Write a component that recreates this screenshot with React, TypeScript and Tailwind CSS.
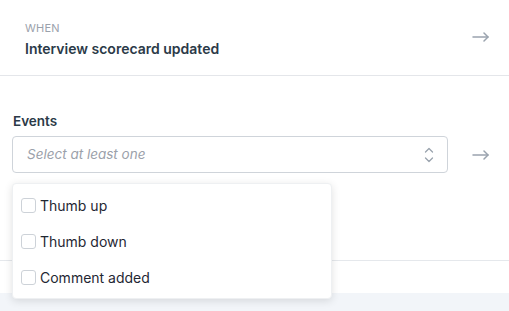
import React from 'react';

const ArrowRight = () => (
  <svg width="17" height="10" viewBox="0 0 17 10" fill="none" stroke="#9aa3ae" strokeWidth="1.5" strokeLinecap="round" strokeLinejoin="round">
    <path d="M1 5h15" />
    <path d="M12 1l4 4-4 4" />
  </svg>
);

const UpDown = () => (
  <svg width="10" height="16" viewBox="0 0 10 16" fill="none" stroke="#9aa3ae" strokeWidth="1.3" strokeLinecap="round" strokeLinejoin="round">
    <path d="M1.5 5L5 1.5 8.5 5" />
    <path d="M1.5 11L5 14.5 8.5 11" />
  </svg>
);

const options = ['Thumb up', 'Thumb down', 'Comment added'];

const App: React.FC = () => {
  return (
    <div className="relative h-[311px] w-[509px] overflow-hidden bg-white" style={{ fontFamily: 'Inter, "Noto Sans", sans-serif' }}>
      {/* WHEN header */}
      <div className="flex h-[76px] items-center justify-between border-b border-[#e4e6ea] pl-[25px] pr-[20px]">
        <div className="flex flex-col pt-[3px]">
          <span className="text-[11px] leading-[14px] tracking-[0.02em] text-[#9aa1ab]">WHEN</span>
          <span className="mt-[6px] text-[14px] font-semibold leading-[16px] text-[#2b3a48]">Interview scorecard updated</span>
        </div>
        <div className="mt-[-2px]"><ArrowRight /></div>
      </div>

      {/* Events */}
      <div className="pl-[12px] pr-[20px] pt-[37px]">
        <div className="pl-[1px] text-[13.5px] font-semibold leading-[16px] text-[#2b3a48]">Events</div>
        <div className="mt-[7px] flex items-center justify-between">
          <div className="flex h-[37px] w-[436px] items-center justify-between rounded-[4px] border border-[#cfd4da] pl-[14px] pr-[13px]">
            <span className="text-[13.5px] italic text-[#9ba1aa]">Select at least one</span>
            <UpDown />
          </div>
          <ArrowRight />
        </div>
      </div>

      <div className="mt-[87px] border-t border-[#e5e8ec]" />
      <div className="mt-[32px] h-[20px] bg-[#f2f5f9]" />

      {/* Dropdown menu */}
      <div className="absolute left-[12px] top-[183px] w-[320px] rounded-[4px] border border-[#eef0f2] bg-white py-[3px] shadow-[0_2px_8px_rgba(0,0,0,0.12)]">
        {options.map((o) => (
          <div key={o} className="flex h-[36px] items-center pl-[8px]">
            <span className="h-[15px] w-[15px] rounded-[3px] border border-[#cdd2d8] bg-white" />
            <span className="ml-[4px] text-[14px] text-[#1f2733]">{o}</span>
          </div>
        ))}
      </div>
    </div>
  );
};

export default App;
